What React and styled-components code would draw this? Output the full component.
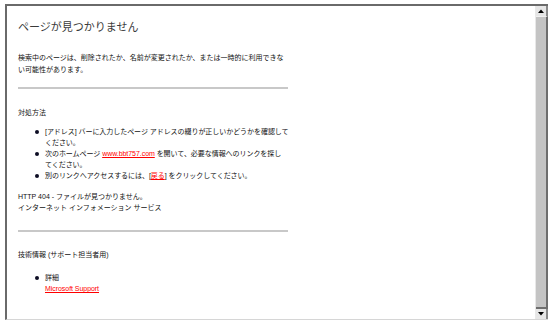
import styled, { createGlobalStyle } from 'styled-components';

const GlobalStyle = createGlobalStyle`
    html, body {
        margin: 0;
        padding: 0;
        background: #ffffff;
    }
    body {
        font-family: "Liberation Sans", "Noto Sans CJK JP", sans-serif;
    }
`

const Frame = styled.div`
    box-sizing: border-box;
    margin: 4px 0 0 5px;
    width: 543px;
    height: 316px;
    border-top: 2px solid #6a6a6a;
    border-left: 2px solid #6a6a6a;
    border-bottom: 1px solid #d6d6d6;
    display: flex;
    background: #ffffff;
`
const Content = styled.div`
    flex: 1;
    padding: 14px 0 0 11px;
    color: #111111;
    font-size: 7px;
    line-height: 11px;
`
const Column = styled.div`
    width: 272px;
`
const Title = styled.h1`
    margin: 0;
    font-size: 11px;
    line-height: 14px;
    font-weight: normal;
    color: #3a3a3a;
`
const Text = styled.p`
    margin: ${props => props.$top || 0}px 0 0 0;
    line-height: ${props => props.$lh || 11}px;
`
const Rule = styled.div`
    margin-top: ${props => props.$top}px;
    width: 270px;
    height: 2px;
    background: #c8c8c8;
`
const List = styled.ul`
    list-style: none;
    margin: ${props => props.$top}px -10px 0 0;
    padding: 0 0 0 17px;
`
const Item = styled.li`
    display: flex;
    gap: 6px;
    letter-spacing: -0.05px;
`
const Dot = styled.span`
    flex: none;
    width: 4px;
    height: 4px;
    margin-top: 3.5px;
    border-radius: 50%;
    background: #0c0c24;
`
const Link = styled.a`
    color: #ff0000;
    text-decoration: underline;
`
const Scrollbar = styled.div`
    width: 12px;
    display: flex;
    flex-direction: column;
    background: #d0d0d0;
    border-left: 1px solid #e8e8e8;
`
const ArrowButton = styled.div`
    height: 10px;
    display: flex;
    align-items: center;
    justify-content: center;
    background: #e6e6e6;
    border-right: 2px solid #8a8a8a;
`
const Thumb = styled.div`
    flex: 1;
    background: #c4c4c4;
    border-top: 1px solid #f0f0f0;
    border-right: 2px solid #6e6e6e;
    border-bottom: 2px solid #6e6e6e;
`

const Arrow = ({ down }) => (
    <svg width="6" height="4" viewBox="0 0 6 4">
        {down
            ? <polygon points="0,0 6,0 3,3.5" fill="#000" />
            : <polygon points="0,4 6,4 3,0.5" fill="#000" />}
    </svg>
)

function App() {
    return (
        <>
            <GlobalStyle />
            <Frame>
                <Content>
                    <Column>
                        <Title>ページが見つかりません</Title>
                        <Text $top={18} $lh={12}>
                            検索中のページは、削除されたか、名前が変更されたか、または一時的に利用できない可能性があります。
                        </Text>
                        <Rule $top={11} />
                        <Text $top={18}>対処方法</Text>
                        <List $top={8}>
                            <Item>
                                <Dot />
                                <span>[アドレス] バーに入力したページ アドレスの綴りが正しいかどうかを確認して<br />ください。</span>
                            </Item>
                            <Item>
                                <Dot />
                                <span>次のホームページ <Link href="#">www.bbt757.com</Link> を開いて、必要な情報へのリンクを探し<br />てください。</span>
                            </Item>
                            <Item>
                                <Dot />
                                <span>別のリンクへアクセスするには、[<Link href="#">戻る</Link>] をクリックしてください。</span>
                            </Item>
                        </List>
                        <Text $top={10}>
                            HTTP 404 - ファイルが見つかりません。<br />
                            インターネット インフォメーション サービス
                        </Text>
                        <Rule $top={17} />
                        <Text $top={17}>技術情報 (サポート担当者用)</Text>
                        <List $top={12}>
                            <Item>
                                <Dot />
                                <span>
                                    詳細<br />
                                    <Link href="#">Microsoft Support</Link>
                                </span>
                            </Item>
                        </List>
                    </Column>
                </Content>
                <Scrollbar>
                    <ArrowButton><Arrow /></ArrowButton>
                    <Thumb />
                    <ArrowButton><Arrow down /></ArrowButton>
                </Scrollbar>
            </Frame>
        </>
    )
}

export default App
